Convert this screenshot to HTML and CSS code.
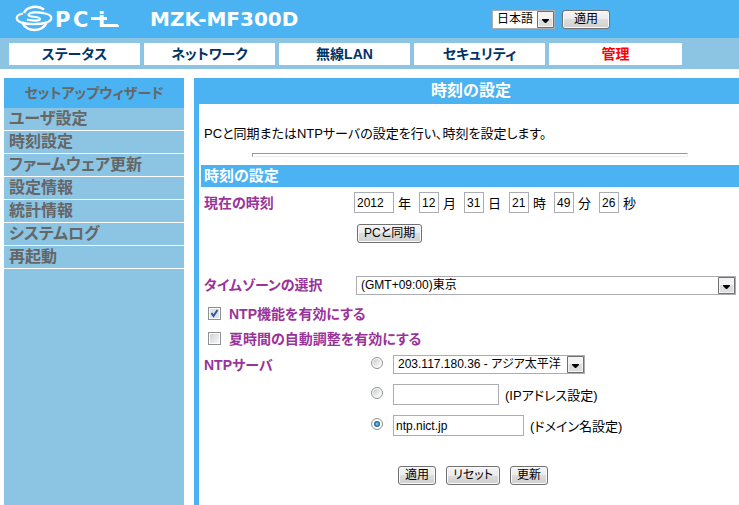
FILE: index.html
```
<!DOCTYPE html>
<html lang="ja">
<head>
    <meta charset="UTF-8">
    <meta name="viewport" content="width=device-width, initial-scale=1.0">
    <title>MZK-MF300D</title>
    <link rel="stylesheet" href="styles.css">
</head>
<body>
    <header class="header">
        <svg class="logo" width="108" height="30" viewBox="0 0 108 30" role="img" aria-label="PCi">
            <g fill="none" stroke="#fff">
                <path d="M9 9A12 9 0 0 1 29 5.500" stroke-width="2.400"/>
                <path d="M8 19.500A12 9 0 0 0 31 19.500" stroke-width="2.600"/>
                <path d="M8 9.500C0 11 0 16 6 18.400C13 20.800 25 20.800 32 18.400C39 15.500 37 11 30 9.500" stroke-width="2.200"/>
                <path d="M30 9.500C22 7.500 14 8 13.500 11C13.500 13.500 25 12 25 15C25 17 17 17 12 15.500" stroke-width="2.200"/>
            </g>
            <text class="logo-text" x="40 58 83" y="23">PCi</text>
            <g fill="#fff">
                <rect x="76" y="13" width="16" height="3"/>
                <rect x="85" y="20" width="18" height="3"/>
                <circle cx="103" cy="22" r="1"/>
            </g>
        </svg>
        <h1 class="model">MZK-MF300D</h1>
        <form class="lang">
            <select class="select" aria-label="言語">
                <option>日本語</option>
            </select>
            <button type="button" class="btn btn-lang">適用</button>
        </form>
    </header>

    <nav class="tabs">
        <a href="#status">ステータス</a>
        <a href="#network">ネットワーク</a>
        <a href="#wireless">無線LAN</a>
        <a href="#security">セキュリティ</a>
        <a href="#admin" class="active">管理</a>
    </nav>

    <div class="page">
        <nav class="sidebar">
            <a href="#wizard" class="wizard">セットアップウィザード</a>
            <a href="#user">ユーザ設定</a>
            <a href="#time">時刻設定</a>
            <a href="#firmware">ファームウェア更新</a>
            <a href="#info">設定情報</a>
            <a href="#stats">統計情報</a>
            <a href="#log">システムログ</a>
            <a href="#reboot">再起動</a>
        </nav>

        <main class="content">
            <h2 class="title">時刻の設定</h2>
            <p class="intro">PCと同期またはNTPサーバの設定を行い、時刻を設定します。</p>
            <form class="settings">
                <hr class="rule">
                <h3 class="section">時刻の設定</h3>
                <div class="row">
                    <span class="label">現在の時刻</span>
                    <div class="clock">
                        <label><input type="text" class="year" value="2012">年</label>
                        <label><input type="text" value="12">月</label>
                        <label><input type="text" value="31">日</label>
                        <label><input type="text" value="21">時</label>
                        <label><input type="text" value="49">分</label>
                        <label><input type="text" value="26">秒</label>
                    </div>
                </div>
                <div class="sync">
                    <button type="button" class="btn">PCと同期</button>
                </div>
                <div class="row zone">
                    <label class="label" for="timezone">タイムゾーンの選択</label>
                    <select class="select" id="timezone">
                        <option>(GMT+09:00)東京</option>
                    </select>
                </div>
                <div class="check">
                    <input type="checkbox" id="ntp" checked>
                    <label for="ntp">NTP機能を有効にする</label>
                </div>
                <div class="check">
                    <input type="checkbox" id="dst">
                    <label for="dst">夏時間の自動調整を有効にする</label>
                </div>
                <div class="row servers">
                    <span class="label">NTPサーバ</span>
                    <div class="server-list">
                        <div class="server">
                            <input type="radio" name="server" aria-label="リスト">
                            <select class="select" aria-label="NTPサーバ">
                                <option>203.117.180.36 - アジア太平洋</option>
                            </select>
                        </div>
                        <div class="server">
                            <input type="radio" name="server" id="by-ip">
                            <input type="text" class="ip" aria-label="IPアドレス">
                            <label for="by-ip">(IPアドレス設定)</label>
                        </div>
                        <div class="server">
                            <input type="radio" name="server" id="by-name" checked>
                            <input type="text" class="domain" aria-label="ドメイン名" value="ntp.nict.jp">
                            <label for="by-name">(ドメイン名設定)</label>
                        </div>
                    </div>
                </div>
                <div class="actions">
                    <button type="button" class="btn">適用</button>
                    <button type="reset" class="btn">リセット</button>
                    <button type="button" class="btn">更新</button>
                </div>
            </form>
        </main>
    </div>
</body>
</html>
```
FILE: styles.css
```
* {
    box-sizing: border-box;
}
body {
    margin: 0;
    min-height: 100vh;
    display: flex;
    flex-direction: column;
    background-color: #fff;
    color: #000;
    font-family: "Liberation Sans", "Noto Sans CJK JP", sans-serif;
    font-size: 13px;
    font-feature-settings: "palt";
}
a {
    text-decoration: none;
}
h1, h2, h3, p {
    margin: 0;
}
input, select, button {
    margin: 0;
    font: inherit;
    font-size: 12px;
    color: inherit;
    font-feature-settings: inherit;
}

/* header */
.header {
    display: flex;
    align-items: center;
    height: 38px;
    padding-left: 15px;
    background-color: #4cb3f2;
}
.logo {
    flex: none;
}
.logo-text {
    font-family: "DejaVu Sans", sans-serif;
    font-size: 21px;
    font-weight: bold;
    fill: #fff;
}
.model {
    width: 341px;
    padding-left: 27px;
    color: #fff;
    font-family: "DejaVu Sans", sans-serif;
    font-size: 20px;
}
.lang {
    display: flex;
    gap: 7px;
    margin-left: 28px;
}
.lang .select {
    width: 63px;
}

/* main tabs */
.tabs {
    display: flex;
    gap: 4px;
    height: 31px;
    padding: 5px 57px 4px 9px;
    background-color: #8cc4e3;
}
.tabs a {
    flex: 1;
    line-height: 22px;
    background-color: #fff;
    color: #003366;
    font-size: 14px;
    font-weight: bold;
    text-align: center;
}
.tabs .active {
    flex: none;
    width: 133px;
    color: #f00;
}

.page {
    display: flex;
    flex: 1;
    gap: 10px;
    padding: 9px 0 0 4px;
}

/* side menu */
.sidebar {
    width: 180px;
    background-color: #8cc4e3;
}
.sidebar a {
    display: block;
    height: 23px;
    padding-left: 5px;
    border-bottom: 1px solid #fff;
    color: #666;
    font-size: 16px;
    font-weight: bold;
    line-height: 22px;
}
.sidebar .wizard {
    height: 30px;
    padding: 0;
    border: 0;
    background-color: #4cb3f2;
    font-size: 14px;
    line-height: 30px;
    text-align: center;
}

/* content */
.content {
    flex: 1;
    border-left: 5px solid #4cb3f2;
}
.title {
    height: 26px;
    padding-left: 4px;
    background-color: #4cb3f2;
    color: #fff;
    font-size: 16px;
    line-height: 26px;
    text-align: center;
}
.intro {
    padding: 20px 5px 0;
    line-height: 20px;
}
.rule {
    width: 81%;
    height: 4px;
    margin: 9px auto 8px;
    border: 1px solid;
    border-color: #999 #eee #eee #999;
}
.settings {
    padding-left: 2px;
}
.section {
    height: 22px;
    padding-left: 3px;
    background-color: #4cb3f2;
    color: #fff;
    font-size: 15px;
    line-height: 22px;
}
.row {
    display: flex;
    align-items: center;
    margin-top: 5px;
    padding-left: 3px;
}
.label {
    width: 150px;
}
.label, .check label {
    color: #993399;
    font-size: 14px;
    font-weight: bold;
    line-height: 20px;
}
input[type="text"] {
    width: 20px;
    height: 21px;
    padding: 0 2px;
    border: 1px solid #abadb3;
    background-color: #fff;
}
.clock {
    display: flex;
}
.clock label {
    display: flex;
    align-items: center;
    gap: 4px;
    width: 45px;
}
.clock label:first-child {
    width: 65px;
}
.clock .year {
    width: 40px;
}
.btn {
    height: 19px;
    padding: 0 6px;
    border: 1px solid #707070;
    border-radius: 3px;
    background: linear-gradient(#f4f4f4, #ebebeb 50%, #ddd 50%, #cfcfcf);
    box-shadow: inset 0 0 0 1px #fafafa;
    line-height: 17px;
}
.btn-lang {
    padding: 0 11px;
}
.sync {
    padding: 11px 0 0 156px;
}
.select {
    height: 19px;
    padding: 0 18px 0 4px;
    border: 1px solid #abadb3;
    border-radius: 0;
    background: #fff url("data:image/svg+xml,%3Csvg xmlns='http://www.w3.org/2000/svg' width='17' height='17'%3E%3Cpath fill='%23f3f3f3' stroke='%23707070' d='M.5.5h16v16H.5z'/%3E%3Cpath fill='%23ddd' d='M2 8h13v7H2z'/%3E%3Cpath d='M5 8h7v1l-3 3H8L5 9z'/%3E%3C/svg%3E") no-repeat right center;
    line-height: 17px;
    appearance: none;
}
.zone {
    margin-top: 32px;
    padding-right: 3px;
}
.zone .label {
    width: 152px;
}
.zone .select {
    flex: 1;
}
.check {
    display: flex;
    align-items: center;
    gap: 8px;
    height: 25px;
    padding-left: 7px;
}
.zone + .check {
    margin-top: 6px;
}
input[type="checkbox"] {
    width: 13px;
    height: 13px;
    border: 1px solid #8e8f8f;
    background: linear-gradient(135deg, #d0d3d6, #f6f6f6) content-box;
    padding: 1px;
    appearance: none;
}
input[type="checkbox"]:checked {
    background: url("data:image/svg+xml,%3Csvg xmlns='http://www.w3.org/2000/svg' width='11' height='11'%3E%3Cpath fill='%23dde2e8' d='M1 1h9v9H1z'/%3E%3Cpath fill='none' stroke='%233a539b' stroke-width='2' d='M2.500 5l2 3L8.500 2'/%3E%3C/svg%3E") no-repeat center;
}
input[type="radio"] {
    width: 12px;
    height: 12px;
    border: 1px solid #8e8f8f;
    border-radius: 50%;
    background: linear-gradient(135deg, #c8ccd0, #fff) content-box;
    padding: 1px;
    appearance: none;
}
input[type="radio"]:checked {
    background: radial-gradient(circle at 3px 3px, #9fdcf5 0, #2a7fae 2px, #0b3a5c 4px) content-box;
    padding: 2px;
}
.servers {
    align-items: flex-start;
    margin-top: 4px;
}
.servers .label {
    width: 167px;
}
.server-list {
    display: flex;
    flex-direction: column;
    gap: 10px;
}
.server {
    display: flex;
    align-items: center;
}
.server input[type="radio"] {
    margin-right: 10px;
    margin-bottom: 3px;
}
.server .select {
    width: 192px;
}
.server .ip {
    width: 106px;
    margin-right: 6px;
}
.server .domain {
    width: 131px;
    margin-right: 6px;
}
.actions {
    display: flex;
    gap: 10px;
    padding: 30px 0 20px 197px;
}
```
